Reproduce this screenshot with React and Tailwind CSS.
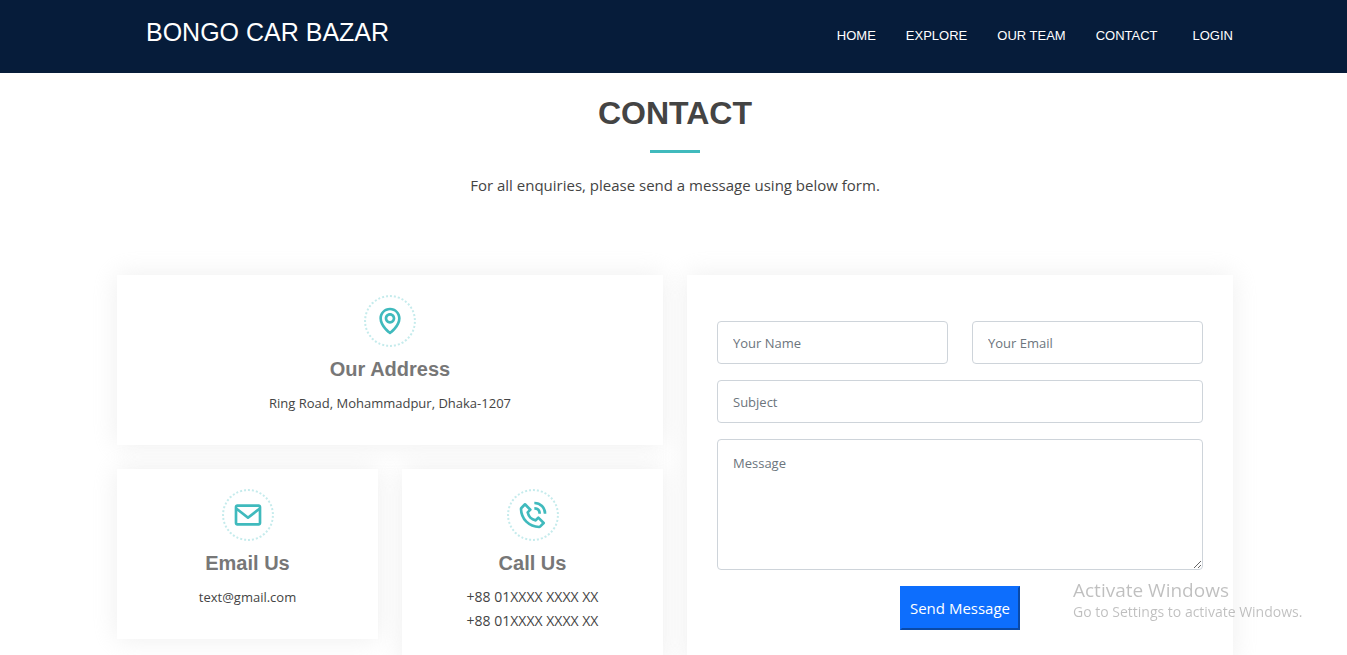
import { BiMap, BiEnvelope, BiPhoneCall } from "react-icons/bi";

const navLinks = ["Home", "Explore", "Our Team", "Contact"];

const fieldClass =
  "block w-full min-w-0 rounded border border-[#ced4da] bg-white px-[15px] text-[13px] leading-[21px] text-[#212529] placeholder:text-[#6c757d] outline-none focus:border-[#40babd]";

function Header() {
  return (
    <header className="bg-[#061c3a] pl-[3px] text-white">
      <div className="mx-auto flex h-[73px] max-w-[1116px] items-start justify-between pl-[29px] font-['Liberation_Sans',Arial,sans-serif]">
        <a href="#home" className="pt-[14px] text-[25px] leading-9">
          BONGO CAR BAZAR
        </a>
        <nav className="flex pt-[26px] text-[13px] leading-5 uppercase">
          <div className="flex gap-[30px]">
            {navLinks.map((link) => (
              <a key={link} href="#contact">
                {link}
              </a>
            ))}
          </div>
          <a href="#login" className="ml-[35px]">
            Login
          </a>
        </nav>
      </div>
    </header>
  );
}

function InfoCard({ icon: Icon, title, lines, className }) {
  return (
    <section
      className={`flex flex-col items-center bg-white pt-5 pb-[30px] text-center shadow-[0_0_24px_rgba(214,215,216,0.4)] ${className}`}
    >
      <div className="flex size-[52px] items-center justify-center rounded-full border-2 border-dotted border-[#c5ebec] text-[#40babd]">
        <Icon className="size-8" aria-hidden="true" />
      </div>
      <h3 className="mt-[10px] font-['Liberation_Sans',Arial,sans-serif] text-[20px] leading-6 font-bold text-[#777777]">
        {title}
      </h3>
      <div className="mt-[10px] leading-6">
        {lines.map((line, i) => (
          <p key={i}>{line}</p>
        ))}
      </div>
    </section>
  );
}

function ContactForm() {
  return (
    <form
      onSubmit={(e) => e.preventDefault()}
      className="bg-white px-[30px] pt-[46px] pb-[33px] shadow-[0_0_24px_rgba(214,215,216,0.4)]"
    >
      <div className="grid grid-cols-2 gap-x-6 gap-y-4">
        <input type="text" aria-label="Your Name" placeholder="Your Name" className={`${fieldClass} h-[43px]`} />
        <input type="email" aria-label="Your Email" placeholder="Your Email" className={`${fieldClass} h-[43px]`} />
        <input type="text" aria-label="Subject" placeholder="Subject" className={`${fieldClass} col-span-2 h-[43px]`} />
        <textarea aria-label="Message" placeholder="Message" className={`${fieldClass} col-span-2 h-[131px] py-[13px]`} />
      </div>
      <div className="mt-4 text-center">
        <button
          type="submit"
          className="h-11 border-2 border-[#0d6efd] border-r-[#0a4aa8] border-b-[#0a4aa8] bg-[#0d6efd] px-2 text-[15px] leading-6 text-white"
        >
          Send Message
        </button>
      </div>
    </form>
  );
}

export default function App() {
  return (
    <div className="min-h-screen bg-white font-['Open_Sans','Noto_Sans',sans-serif] text-[#444444]">
      <Header />
      <main className="pl-[3px]">
        <div className="mx-auto max-w-[1116px] pb-5">
          <div className="flex flex-col items-center pt-[21px] text-center">
            <h1 className="font-['Liberation_Sans',Arial,sans-serif] text-[32px] leading-[38px] font-bold uppercase">
              Contact
            </h1>
            <div className="mt-[18px] h-[3px] w-[50px] bg-[#40babd]" />
            <p className="mt-5 text-[15px] leading-6">
              For all enquiries, please send a message using below form.
            </p>
          </div>
          <div className="mt-[78px] grid grid-cols-2 gap-6">
            <div className="grid grid-cols-2 items-start gap-6">
              <InfoCard
                icon={BiMap}
                title="Our Address"
                lines={["Ring Road, Mohammadpur, Dhaka-1207"]}
                className="col-span-2 text-[13px]"
              />
              <InfoCard icon={BiEnvelope} title="Email Us" lines={["text@gmail.com"]} className="text-[13px]" />
              <InfoCard
                icon={BiPhoneCall}
                title="Call Us"
                lines={["+88 01XXXX XXXX XX", "+88 01XXXX XXXX XX"]}
                className="text-[14px]"
              />
            </div>
            <ContactForm />
          </div>
        </div>
      </main>
      <aside className="pointer-events-none fixed right-[38px] bottom-[33px] w-[236px] text-[#000000]/25">
        <p className="text-[19px] leading-6">Activate Windows</p>
        <p className="text-[14px] leading-5">Go to Settings to activate Windows.</p>
      </aside>
    </div>
  );
}
